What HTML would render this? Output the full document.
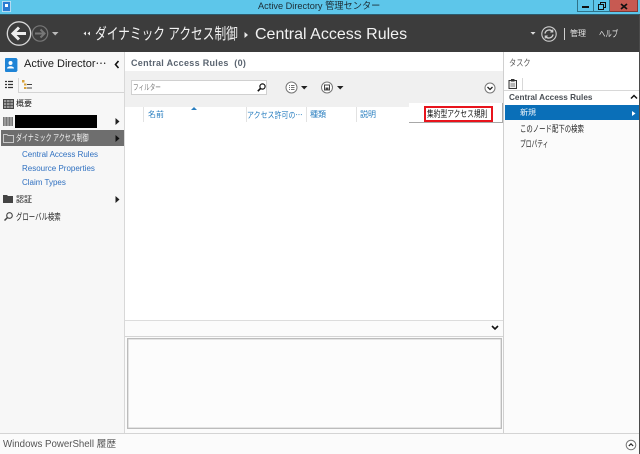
<!DOCTYPE html>
<html lang="ja"><head><meta charset="utf-8"><title>Active Directory 管理センター</title>
<style>
html,body{margin:0;padding:0}
body{width:640px;height:454px;overflow:hidden;position:relative;background:#fbfbfb;font-family:"Liberation Sans","Noto Sans CJK JP",sans-serif;color:#222}
.a{position:absolute}
.t{position:absolute;white-space:nowrap;line-height:14px;font-size:8px;transform-origin:0 50%}
svg{position:absolute;overflow:visible}
</style></head><body>
<!-- title bar -->
<div class="a" style="left:0;top:0;width:640px;height:14px;background:#5dc6ea"></div>
<div class="t" style="left:258px;top:0;font-size:9.5px;color:#1c2c34;transform:scaleX(.97)">Active Directory 管理センター</div>
<svg style="left:2px;top:1px" width="10" height="11"><rect x="0.5" y="0.5" width="8" height="10" fill="#2b7cd3" stroke="#fff" stroke-width=".6"/><rect x="3" y="3" width="3" height="3" fill="#fff"/></svg>
<div class="a" style="left:577px;top:0;width:17px;height:12px;background:#5dc6ea;border:1px solid #2f7288;border-top:0;box-sizing:border-box"></div>
<div class="a" style="left:582px;top:6px;width:7px;height:2px;background:#111"></div>
<div class="a" style="left:594px;top:0;width:16px;height:12px;background:#5dc6ea;border:1px solid #2f7288;border-top:0;border-left:0;box-sizing:border-box"></div>
<svg style="left:598px;top:2px" width="9" height="8"><rect x="2.5" y="0.5" width="5" height="5" fill="none" stroke="#111"/><rect x="0.5" y="2.5" width="5" height="5" fill="#5dc6ea" stroke="#111"/></svg>
<div class="a" style="left:610px;top:0;width:28px;height:12px;background:#c75a52;border:1px solid #7d3a36;border-top:0;border-left:0;box-sizing:border-box"></div>
<svg style="left:620px;top:3px" width="8" height="7"><path d="M1 1L7 6M7 1L1 6" stroke="#111" stroke-width="1.7"/></svg>
<!-- dark bar -->
<div class="a" style="left:0;top:14px;width:640px;height:38px;background:#3c3c3c"></div>
<div class="a" style="left:0;top:14px;width:640px;height:1px;background:#2c5a6c"></div>
<svg style="left:0;top:14px" width="90" height="38">
<circle cx="19" cy="19.5" r="11.7" fill="none" stroke="#d8d8d8" stroke-width="1.3"/>
<path d="M26 19.5H13M19 13.5L13 19.5L19 25.5" fill="none" stroke="#eee" stroke-width="3"/>
<circle cx="40" cy="19.5" r="7.7" fill="none" stroke="#777" stroke-width="1.2"/>
<path d="M35 19.5H44M40.500 15.500L44.500 19.500L40.500 23.500" fill="none" stroke="#777" stroke-width="2"/>
<path d="M52 18H58.500L55.200 21.500Z" fill="#bbb"/>
<path d="M86 17.500L83.500 19.500L86 21.500ZM90 17.500L87.500 19.500L90 21.500Z" fill="#e8e8e8"/>
</svg>
<div class="t" style="left:95px;top:25px;font-size:15.5px;line-height:20px;color:#f2f2f2;transform:scaleX(.755)">ダイナミック アクセス制御</div>
<svg style="left:244px;top:32px" width="5" height="6"><path d="M0.500 0L4 3L0.500 6Z" fill="#e8e8e8"/></svg>
<div class="t" style="left:255px;top:25px;font-size:16px;line-height:20px;color:#f2f2f2">Central Access Rules</div>
<svg style="left:528px;top:22px" width="60" height="24">
<path d="M2.500 10H7.500L5 12.800Z" fill="#ddd"/>
<circle cx="21" cy="12" r="7.200" fill="none" stroke="#cfcfcf" stroke-width="1.1"/>
<path d="M17 11.500a4.300 4.300 0 0 1 7.500-2M25 12.500a4.300 4.300 0 0 1-7.500 2" fill="none" stroke="#cfcfcf" stroke-width="1.4"/>
<path d="M24.800 7.500V10H22.300M17.200 16.500V14H19.700" fill="none" stroke="#cfcfcf"/>
<rect x="36" y="6" width="1" height="12" fill="#cfcfcf"/>
</svg>
<div class="t" style="left:570px;top:27px;font-size:8px;color:#e6e6e6">管理</div>
<div class="t" style="left:599px;top:27px;font-size:9px;color:#e6e6e6;transform:scaleX(.71)">ヘルプ</div>
<!-- left panel -->
<div class="a" style="left:0;top:52px;width:124px;height:381px;background:#f7f7f7"></div>
<div class="a" style="left:124px;top:52px;width:1px;height:381px;background:#d8d8d8"></div>
<svg style="left:5px;top:58px" width="13" height="14"><rect width="12" height="14" rx="1" fill="#1f84d6"/><rect x="12" y="1" width="1" height="12" fill="#9cc9ee"/><circle cx="5.500" cy="5" r="2" fill="#fff"/><path d="M2 10.500c0-3 7-3 7 0Z" fill="#fff"/></svg>
<div class="t" style="left:24px;top:57px;font-size:11px;color:#1a1a1a">Active Director⋯</div>
<svg style="left:114px;top:60px" width="6" height="9"><path d="M4.500 1L1.500 4.500L4.500 8" fill="none" stroke="#111" stroke-width="1.600"/></svg>
<div class="a" style="left:18px;top:92px;width:106px;height:1px;background:#d4d4d4"></div>
<div class="a" style="left:18px;top:78px;width:1px;height:15px;background:#d4d4d4"></div>
<svg style="left:5px;top:81px" width="8" height="9"><path d="M0 .5H2M3 .5H8M0 3.500H2M3 3.500H8M0 6.500H2M3 6.500H8" stroke="#333" stroke-width="1.200" /></svg>
<svg style="left:22px;top:80px" width="10" height="10"><rect x="0" y="0" width="2.500" height="2.500" fill="#d8a23a"/><rect x="2" y="3.500" width="2.500" height="2" fill="#d8a23a"/><rect x="2" y="7" width="2.500" height="2" fill="#d8a23a"/><path d="M5 4.500H10M5 8H10" stroke="#444"/></svg>
<svg style="left:3px;top:99px" width="11" height="10"><rect x=".5" y=".5" width="10" height="9" fill="#999" stroke="#444"/><path d="M0 3.500H11M0 6.500H11M3.500 0V10M7 0V10" stroke="#444" stroke-width=".7"/></svg>
<div class="t" style="left:16px;top:97px;font-size:8px">概要</div>
<svg style="left:3px;top:116px" width="10" height="11"><rect x="0" y="1" width="10" height="9" fill="#777"/><path d="M2 1V10M5 1V10M8 1V10" stroke="#ddd" stroke-width=".7"/></svg>
<div class="a" style="left:15px;top:115px;width:82px;height:13px;background:#000"></div>
<svg style="left:115px;top:118px" width="5" height="7"><path d="M.5 0L4.500 3.500L.5 7Z" fill="#222"/></svg>
<div class="a" style="left:1px;top:130px;width:123px;height:16px;background:#6e6e6e"></div>
<svg style="left:3px;top:133px" width="11" height="10"><path d="M.5 1.500H4L5 2.500H10.500V9.500H.5Z" fill="none" stroke="#c8c8c8"/></svg>
<div class="t" style="left:16px;top:131px;font-size:9px;color:#f4f4f4;transform:scaleX(.66)">ダイナミック アクセス制御</div>
<svg style="left:115px;top:135px" width="5" height="7"><path d="M.5 0L4.500 3.500L.5 7Z" fill="#111"/></svg>
<div class="t" style="left:22px;top:148px;font-size:8px;color:#2f70c0">Central Access Rules</div>
<div class="t" style="left:22px;top:162px;font-size:8px;color:#2f70c0">Resource Properties</div>
<div class="t" style="left:22px;top:176px;font-size:8px;color:#2f70c0">Claim Types</div>
<svg style="left:3px;top:195px" width="10" height="8"><path d="M0 0H4L5 1H10V8H0Z" fill="#444"/></svg>
<div class="t" style="left:16px;top:193px;font-size:8px">認証</div>
<svg style="left:115px;top:196px" width="5" height="7"><path d="M.5 0L4.500 3.500L.5 7Z" fill="#222"/></svg>
<svg style="left:4px;top:212px" width="9" height="9"><circle cx="5.500" cy="3.500" r="2.800" fill="none" stroke="#444" stroke-width="1.100"/><path d="M3.500 5.500L.5 8.500" stroke="#444" stroke-width="1.500"/></svg>
<div class="t" style="left:16px;top:210px;font-size:9px;transform:scaleX(.71)">グローバル検索</div>
<!-- center -->
<div class="a" style="left:125px;top:52px;width:378px;height:268px;background:#fff"></div>
<div class="t" style="left:131px;top:56px;font-size:9px;font-weight:bold;color:#5a6470;letter-spacing:.3px">Central Access Rules&nbsp; (0)</div>
<div class="a" style="left:125px;top:71px;width:378px;height:36px;background:#f0f0f0"></div>
<div class="a" style="left:131px;top:80px;width:136px;height:15px;background:#fff;border:1px solid #d0d0d0;box-sizing:border-box"></div>
<div class="t" style="left:133px;top:81px;font-size:8px;color:#777;transform:scaleX(.7)">フィルター</div>
<svg style="left:257px;top:83px" width="9" height="9"><circle cx="5.500" cy="3.500" r="2.600" fill="none" stroke="#111" stroke-width="1.200"/><path d="M3.500 5.500L.8 8.200" stroke="#111" stroke-width="1.600"/></svg>
<svg style="left:284px;top:80px" width="60" height="16">
<circle cx="7.500" cy="7.500" r="5.500" fill="#fff" stroke="#777"/>
<path d="M5 5.500H6M7 5.500H10.500M5 7.500H6M7 7.500H10.500M5 9.500H6M7 9.500H10.500" stroke="#444" stroke-width=".8"/>
<path d="M17 6H23.500L20.200 9.500Z" fill="#222"/>
<circle cx="43" cy="7.500" r="5.500" fill="#fff" stroke="#777"/>
<rect x="40.500" y="5" width="5" height="5" fill="none" stroke="#444"/><rect x="41.500" y="7.500" width="3" height="2" fill="#444"/>
<path d="M53 6H59.500L56.200 9.500Z" fill="#222"/>
</svg>
<svg style="left:484px;top:82px" width="12" height="12"><circle cx="6" cy="6" r="5" fill="#fff" stroke="#777"/><path d="M3.500 5L6 7.500L8.500 5" fill="none" stroke="#222" stroke-width="1.300"/></svg>
<!-- column headers -->
<div class="a" style="left:143px;top:107px;width:1px;height:15px;background:#e2e2e2"></div>
<div class="a" style="left:246px;top:107px;width:1px;height:15px;background:#e2e2e2"></div>
<div class="a" style="left:306px;top:107px;width:1px;height:15px;background:#e2e2e2"></div>
<div class="a" style="left:356px;top:107px;width:1px;height:15px;background:#e2e2e2"></div>
<svg style="left:191px;top:107px" width="6" height="3"><path d="M0 3L3 0L6 3Z" fill="#2a7fc0"/></svg>
<div class="t" style="left:148px;top:108px;font-size:8px;color:#2a7fc0">名前</div>
<div class="t" style="left:247px;top:108px;font-size:8.500px;color:#2a7fc0;transform:scaleX(.82)">アクセス許可の⋯</div>
<div class="t" style="left:310px;top:108px;font-size:8px;color:#2a7fc0">種類</div>
<div class="t" style="left:360px;top:108px;font-size:8px;color:#2a7fc0">説明</div>
<!-- popup -->
<div class="a" style="left:409px;top:103px;width:94px;height:20px;background:#fff;border-bottom:1px solid #a8a8a8;border-right:1px solid #a8a8a8;box-sizing:border-box"></div>
<div class="a" style="left:424px;top:106px;width:69px;height:16px;border:2px solid #e8141c;box-sizing:border-box;background:#fff"></div>
<div class="t" style="left:427px;top:107px;font-size:9px;color:#111;transform:scaleX(.75)">集約型アクセス規則</div>
<!-- lower center -->
<div class="a" style="left:125px;top:320px;width:378px;height:1px;background:#dcdcdc"></div>
<div class="a" style="left:125px;top:321px;width:378px;height:112px;background:#fbfbfb"></div>
<div class="a" style="left:125px;top:336px;width:378px;height:1px;background:#d4d4d4"></div>
<svg style="left:491px;top:325px" width="8" height="6"><path d="M1 1L4 4L7 1" fill="none" stroke="#111" stroke-width="1.600"/></svg>
<div class="a" style="left:127px;top:338px;width:375px;height:91px;border:1px solid #bcbcbc;box-shadow:inset 0 0 0 .5px #ccc;box-sizing:border-box;background:#fcfcfc"></div>
<!-- right panel -->
<div class="a" style="left:503px;top:52px;width:1px;height:381px;background:#d0d0d0"></div>
<div class="a" style="left:504px;top:52px;width:136px;height:381px;background:#fbfbfb"></div>
<div class="a" style="left:504px;top:52px;width:136px;height:38px;background:#fff"></div>
<div class="t" style="left:509px;top:56px;font-size:9px;color:#555;transform:scaleX(.8)">タスク</div>
<div class="a" style="left:504px;top:90px;width:136px;height:1px;background:#d8d8d8"></div>
<div class="a" style="left:522px;top:78px;width:1px;height:13px;background:#d8d8d8"></div>
<svg style="left:508px;top:79px" width="10" height="10"><rect x="1" y="1.500" width="7.500" height="8" fill="#eee" stroke="#333"/><rect x="3" y="0" width="3.500" height="2.500" fill="#333"/><path d="M2.500 5H7M2.500 7H7" stroke="#555" stroke-width=".8"/></svg>
<div class="a" style="left:504px;top:91px;width:136px;height:14px;background:#fff"></div>
<div class="t" style="left:509px;top:91px;font-size:8.200px;font-weight:bold;color:#4a4f55">Central Access Rules</div>
<svg style="left:630px;top:94px" width="8" height="6"><path d="M1 4.500L4 1.500L7 4.500" fill="none" stroke="#111" stroke-width="1.500"/></svg>
<div class="a" style="left:505px;top:105px;width:135px;height:15px;background:#0a6fb8"></div>
<div class="t" style="left:520px;top:106px;font-size:8px;color:#f0f6fb">新規</div>
<svg style="left:632px;top:111px" width="4" height="5"><path d="M0 0L3.500 2.500L0 5Z" fill="#fff"/></svg>
<div class="t" style="left:520px;top:122px;font-size:9px;color:#222;transform:scaleX(.71)">このノード配下の検索</div>
<div class="t" style="left:520px;top:137px;font-size:9px;color:#222;transform:scaleX(.64)">プロパティ</div>
<!-- footer -->
<div class="a" style="left:0;top:433px;width:640px;height:1px;background:#d4d4d4"></div>
<div class="a" style="left:0;top:434px;width:640px;height:20px;background:#fbfbfb"></div>
<div class="t" style="left:3px;top:438px;font-size:9.700px;color:#555">Windows PowerShell 履歴</div>
<svg style="left:625px;top:439px" width="12" height="12"><circle cx="6" cy="6" r="4.800" fill="#fff" stroke="#777"/><path d="M3.800 7L6 4.800L8.200 7" fill="none" stroke="#222" stroke-width="1.200"/></svg>
<div class="a" style="left:639px;top:14px;width:1px;height:440px;background:#4a4a4a"></div>
</body></html>
